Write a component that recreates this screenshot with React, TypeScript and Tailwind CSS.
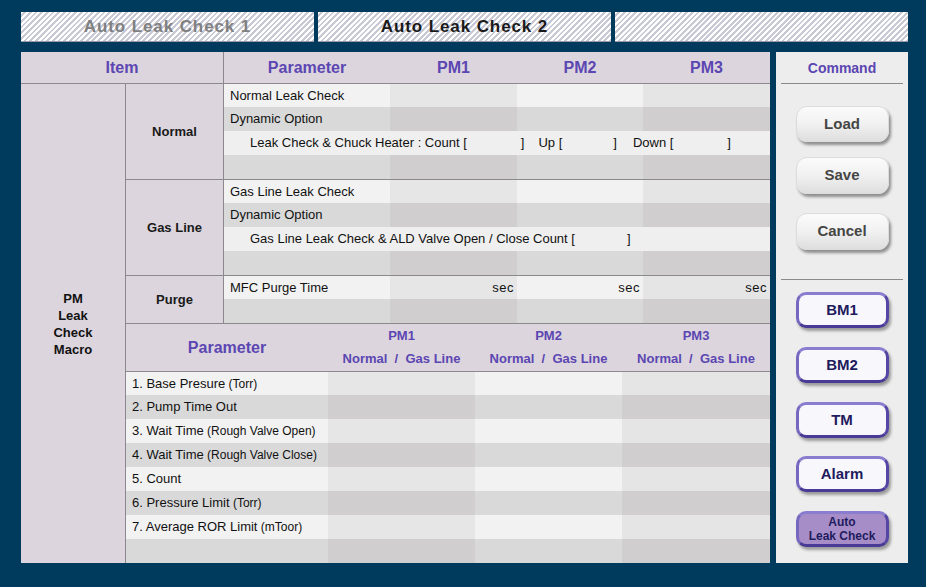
import React from 'react';

const LIGHT = ['bg-[#f2f2f2]', 'bg-[#e6e6e6]', 'bg-[#f2f2f2]', 'bg-[#e5e5e5]'];
const DARK = ['bg-[#d9d9d9]', 'bg-[#d0cecf]', 'bg-[#d9d9d9]', 'bg-[#d0cecf]'];
const TOP_W = ['w-[166px]', 'w-[127px]', 'w-[126px]', 'w-[127px]'];
const LOW_W = ['w-[202px]', 'w-[147px]', 'w-[147px]', 'w-[148px]'];

const Row = ({
  h,
  dark,
  label,
  sec,
  widths = TOP_W,
}: {
  h: string;
  dark?: boolean;
  label?: React.ReactNode;
  sec?: boolean;
  widths?: string[];
}) => {
  const colors = dark ? DARK : LIGHT;
  return (
    <div className={`flex ${h}`}>
      {widths.map((w, i) => (
        <div
          key={i}
          className={`${w} ${colors[i]} flex items-center ${i === 0 ? 'pl-[6px]' : 'justify-end pr-[3px]'}`}
        >
          {i === 0 ? label : sec ? <span className="tracking-[0.5px]">sec</span> : null}
        </div>
      ))}
    </div>
  );
};

const SpanRow = ({ children }: { children: React.ReactNode }) => (
  <div className="h-[24px] bg-[#efefef] flex items-center pl-[26px] whitespace-pre">{children}</div>
);

const Group = ({ label, children }: { label: string; children: React.ReactNode }) => (
  <div className="flex border-b border-[#8b898d]">
    <div className="w-[98px] border-r border-[#8b898d] flex items-center justify-center font-bold text-[#1a1a1a]">
      {label}
    </div>
    <div className="w-[546px] flex flex-col">{children}</div>
  </div>
);

const Small = ({ children }: { children: React.ReactNode }) => (
  <span className="text-[12px]">&nbsp;{children}</span>
);

const GrayButton = ({ label, className }: { label: string; className: string }) => (
  <button
    className={`${className} mx-auto w-[93px] rounded-[11px] border border-[#dcdcdc] bg-gradient-to-b from-[#fbfbfb] via-[#f1f1f1] to-[#dedede] shadow-[2px_3px_3px_rgba(0,0,0,0.4)] text-[15px] font-bold text-[#454545] flex items-center justify-center`}
  >
    {label}
  </button>
);

const PurpleButton = ({
  label,
  className,
  active,
}: {
  label: React.ReactNode;
  className: string;
  active?: boolean;
}) => (
  <button
    className={`${className} mx-auto w-[93px] h-[36px] rounded-[10px] border-[3px] border-t-[#8a7dd0] border-l-[#7667c0] border-r-[#5546a6] border-b-[#483a96] shadow-[2px_3px_3px_rgba(0,0,0,0.35)] font-bold text-[#1f1b5e] flex flex-col items-center justify-center ${
      active ? 'bg-[#a68dc7] text-[12px] leading-[14px]' : 'bg-[#f8f8fc] text-[15px]'
    }`}
  >
    {label}
  </button>
);

export default function App() {
  return (
    <div className="w-[926px] h-[587px] bg-[#003a5c] font-['Liberation_Sans',Arial,sans-serif] text-[13px] text-[#111] overflow-hidden">
      {/* tabs */}
      <div className="flex gap-[4px] pl-[21px] pt-[12px]">
        {['Auto Leak Check 1', 'Auto Leak Check 2', ''].map((t, i) => (
          <div
            key={i}
            className={`w-[293px] h-[30px] flex items-center justify-center text-[17px] font-bold tracking-[0.9px] border-b border-[#9a9aa8] bg-[repeating-linear-gradient(135deg,#ffffff_0px,#ffffff_2px,#c9c9d6_2px,#c9c9d6_4px)] ${
              i === 0 ? 'text-[#808080]' : 'text-[#1a1a1a]'
            }`}
          >
            {t}
          </div>
        ))}
      </div>

      <div className="flex gap-[6px] pl-[21px] pt-[10px]">
        {/* main table */}
        <div className="w-[749px] h-[511px] bg-[#dcd5dd] flex flex-col">
          <div className="flex h-[32px] border-b border-[#8b898d] text-[16px] font-bold text-[#5b46b2]">
            <div className="w-[203px] border-r border-[#8b898d] flex items-center justify-center">Item</div>
            <div className="w-[166px] flex items-center justify-center">Parameter</div>
            <div className="w-[127px] flex items-center justify-center">PM1</div>
            <div className="w-[126px] flex items-center justify-center">PM2</div>
            <div className="w-[127px] flex items-center justify-center">PM3</div>
          </div>

          <div className="flex flex-1">
            <div className="w-[105px] border-r border-[#8b898d] flex items-center justify-center text-center font-bold leading-[17px] text-[#111]">
              PM
              <br />
              Leak
              <br />
              Check
              <br />
              Macro
            </div>

            <div className="w-[644px] flex flex-col">
              <Group label="Normal">
                <Row h="h-[23px]" label="Normal Leak Check" />
                <Row h="h-[24px]" dark label="Dynamic Option" />
                <SpanRow>
                  <span>Leak Check &amp; Chuck Heater : Count [</span>
                  <span className="inline-block w-[54px]" />
                  <span>]</span>
                  <span className="inline-block w-[14px]" />
                  <span>Up [</span>
                  <span className="inline-block w-[51px]" />
                  <span>]</span>
                  <span className="inline-block w-[16px]" />
                  <span>Down [</span>
                  <span className="inline-block w-[54px]" />
                  <span>]</span>
                </SpanRow>
                <Row h="h-[24px]" dark />
              </Group>

              <Group label="Gas Line">
                <Row h="h-[23px]" label="Gas Line Leak Check" />
                <Row h="h-[24px]" dark label="Dynamic Option" />
                <SpanRow>
                  <span>Gas Line Leak Check &amp; ALD Valve Open / Close Count [</span>
                  <span className="inline-block w-[52px]" />
                  <span>]</span>
                </SpanRow>
                <Row h="h-[24px]" dark />
              </Group>

              <Group label="Purge">
                <Row h="h-[23px]" label="MFC Purge Time" sec />
                <Row h="h-[24px]" dark />
              </Group>

              {/* lower parameter header */}
              <div className="flex h-[48px] border-b border-[#8b898d] font-bold text-[#5b46b2]">
                <div className="w-[202px] flex items-center justify-center text-[16px]">Parameter</div>
                {['PM1', 'PM2', 'PM3'].map((p, i) => (
                  <div key={p} className={`${LOW_W[i + 1]} flex flex-col items-center pt-[1px] text-[13px]`}>
                    <div className="h-[22px] flex items-center">{p}</div>
                    <div className="h-[23px] flex items-center whitespace-pre">Normal  /  Gas Line</div>
                  </div>
                ))}
              </div>

              <div className="flex flex-col">
                <Row widths={LOW_W} h="h-[23px]" label={<>1. Base Presure<Small>(Torr)</Small></>} />
                <Row widths={LOW_W} h="h-[24px]" dark label="2. Pump Time Out" />
                <Row widths={LOW_W} h="h-[24px]" label={<>3. Wait Time<Small>(Rough Valve Open)</Small></>} />
                <Row widths={LOW_W} h="h-[24px]" dark label={<>4. Wait Time<Small>(Rough Valve Close)</Small></>} />
                <Row widths={LOW_W} h="h-[24px]" label="5. Count" />
                <Row widths={LOW_W} h="h-[24px]" dark label={<>6. Pressure Limit<Small>(Torr)</Small></>} />
                <Row widths={LOW_W} h="h-[24px]" label={<>7. Average ROR Limit<Small>(mToor)</Small></>} />
                <Row widths={LOW_W} h="h-[24px]" dark />
              </div>
            </div>
          </div>
        </div>

        {/* command panel */}
        <div className="w-[132px] h-[511px] bg-[#ededed] flex flex-col">
          <div className="h-[31px] flex items-center justify-center pt-[2px] text-[14px] font-bold text-[#5b46b2]">
            Command
          </div>
          <div className="mx-[5px] h-px bg-[#8a8a8a]" />
          <GrayButton label="Load" className="mt-[22px] h-[36px]" />
          <GrayButton label="Save" className="mt-[15px] h-[37px]" />
          <GrayButton label="Cancel" className="mt-[19px] h-[37px]" />
          <div className="mx-[5px] mt-[29px] h-px bg-[#8a8a8a]" />
          <PurpleButton label="BM1" className="mt-[12px]" />
          <PurpleButton label="BM2" className="mt-[19px]" />
          <PurpleButton label="TM" className="mt-[19px]" />
          <PurpleButton label="Alarm" className="mt-[18px]" />
          <PurpleButton
            label={
              <>
                <span>Auto</span>
                <span>Leak Check</span>
              </>
            }
            className="mt-[19px]"
            active
          />
        </div>
      </div>
    </div>
  );
}
